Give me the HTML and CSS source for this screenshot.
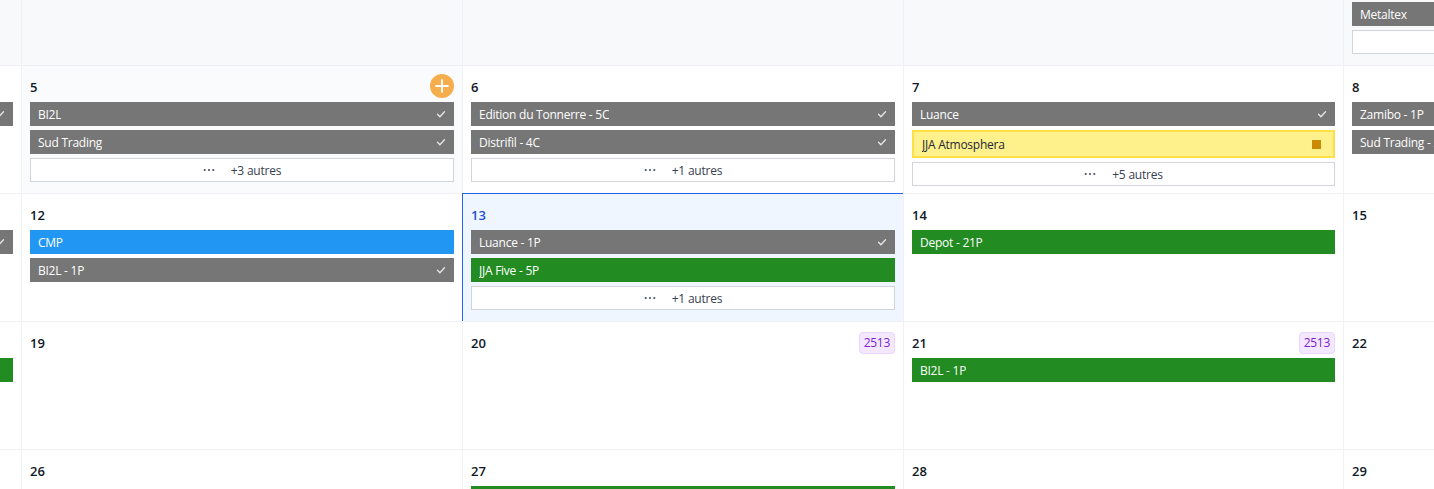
FILE: index.html
```html
<!DOCTYPE html>
<html lang="fr">
<head>
<meta charset="utf-8">
<title>Calendrier</title>
<link rel="stylesheet" href="styles.css">
</head>
<body>
<div class="viewport">
  <div class="calendar">
    <!-- Row 1 -->
    <div class="cell out"><div class="head"><span class="num">28</span></div></div>
    <div class="cell out"><div class="head"><span class="num">29</span></div></div>
    <div class="cell out"><div class="head"><span class="num">30</span></div></div>
    <div class="cell out"><div class="head"><span class="num">31</span></div></div>
    <div class="cell out">
      <div class="head"><span class="num">1</span></div>
      <div class="ev gray"><span class="lbl">Luance</span><svg class="chk" viewBox="0 0 12 12"><path d="M2.5 6.3l2.4 2.4 4.6-5"/></svg></div>
      <div class="ev gray"><span class="lbl">Metaltex</span><svg class="chk" viewBox="0 0 12 12"><path d="M2.5 6.3l2.4 2.4 4.6-5"/></svg></div>
      <button class="more"><svg class="dots" viewBox="0 0 14 4"><circle cx="2" cy="2" r="1.3"/><circle cx="7" cy="2" r="1.3"/><circle cx="12" cy="2" r="1.3"/></svg><span>+2 autres</span></button>
    </div>

    <!-- Row 2 -->
    <div class="cell">
      <div class="head"><span class="num">4</span></div>
      <div class="ev gray"><span class="lbl">Sud Trading</span><svg class="chk" viewBox="0 0 12 12"><path d="M2.5 6.3l2.4 2.4 4.6-5"/></svg></div>
    </div>
    <div class="cell hover">
      <div class="head"><span class="num">5</span><span class="add"><svg viewBox="0 0 24 24"><path d="M12 6v12M6 12h12"/></svg></span></div>
      <div class="ev gray"><span class="lbl">BI2L</span><svg class="chk" viewBox="0 0 12 12"><path d="M2.5 6.3l2.4 2.4 4.6-5"/></svg></div>
      <div class="ev gray"><span class="lbl">Sud Trading</span><svg class="chk" viewBox="0 0 12 12"><path d="M2.5 6.3l2.4 2.4 4.6-5"/></svg></div>
      <button class="more"><svg class="dots" viewBox="0 0 14 4"><circle cx="2" cy="2" r="1.3"/><circle cx="7" cy="2" r="1.3"/><circle cx="12" cy="2" r="1.3"/></svg><span>+3 autres</span></button>
    </div>
    <div class="cell">
      <div class="head"><span class="num">6</span></div>
      <div class="ev gray"><span class="lbl">Edition du Tonnerre - 5C</span><svg class="chk" viewBox="0 0 12 12"><path d="M2.5 6.3l2.4 2.4 4.6-5"/></svg></div>
      <div class="ev gray"><span class="lbl">Distrifil - 4C</span><svg class="chk" viewBox="0 0 12 12"><path d="M2.5 6.3l2.4 2.4 4.6-5"/></svg></div>
      <button class="more"><svg class="dots" viewBox="0 0 14 4"><circle cx="2" cy="2" r="1.3"/><circle cx="7" cy="2" r="1.3"/><circle cx="12" cy="2" r="1.3"/></svg><span>+1 autres</span></button>
    </div>
    <div class="cell">
      <div class="head"><span class="num">7</span></div>
      <div class="ev gray"><span class="lbl">Luance</span><svg class="chk" viewBox="0 0 12 12"><path d="M2.5 6.3l2.4 2.4 4.6-5"/></svg></div>
      <div class="ev yellow"><span class="lbl">JJA Atmosphera</span><span class="sq"></span></div>
      <button class="more"><svg class="dots" viewBox="0 0 14 4"><circle cx="2" cy="2" r="1.3"/><circle cx="7" cy="2" r="1.3"/><circle cx="12" cy="2" r="1.3"/></svg><span>+5 autres</span></button>
    </div>
    <div class="cell">
      <div class="head"><span class="num">8</span></div>
      <div class="ev gray"><span class="lbl">Zamibo - 1P</span><svg class="chk" viewBox="0 0 12 12"><path d="M2.5 6.3l2.4 2.4 4.6-5"/></svg></div>
      <div class="ev gray"><span class="lbl">Sud Trading - 2P</span><svg class="chk" viewBox="0 0 12 12"><path d="M2.5 6.3l2.4 2.4 4.6-5"/></svg></div>
    </div>

    <!-- Row 3 -->
    <div class="cell">
      <div class="head"><span class="num">11</span></div>
      <div class="ev gray"><span class="lbl">Luance</span><svg class="chk" viewBox="0 0 12 12"><path d="M2.5 6.3l2.4 2.4 4.6-5"/></svg></div>
    </div>
    <div class="cell">
      <div class="head"><span class="num">12</span></div>
      <div class="ev blue"><span class="lbl">CMP</span></div>
      <div class="ev gray"><span class="lbl">BI2L - 1P</span><svg class="chk" viewBox="0 0 12 12"><path d="M2.5 6.3l2.4 2.4 4.6-5"/></svg></div>
    </div>
    <div class="cell today">
      <div class="head"><span class="num">13</span></div>
      <div class="ev gray"><span class="lbl">Luance - 1P</span><svg class="chk" viewBox="0 0 12 12"><path d="M2.5 6.3l2.4 2.4 4.6-5"/></svg></div>
      <div class="ev green"><span class="lbl">JJA Five - 5P</span></div>
      <button class="more"><svg class="dots" viewBox="0 0 14 4"><circle cx="2" cy="2" r="1.3"/><circle cx="7" cy="2" r="1.3"/><circle cx="12" cy="2" r="1.3"/></svg><span>+1 autres</span></button>
    </div>
    <div class="cell">
      <div class="head"><span class="num">14</span></div>
      <div class="ev green"><span class="lbl">Depot - 21P</span></div>
    </div>
    <div class="cell">
      <div class="head"><span class="num">15</span></div>
    </div>

    <!-- Row 4 -->
    <div class="cell">
      <div class="head"><span class="num">18</span></div>
      <div class="ev green"><span class="lbl">Depot - 3P</span></div>
    </div>
    <div class="cell">
      <div class="head"><span class="num">19</span></div>
    </div>
    <div class="cell">
      <div class="head"><span class="num">20</span><span class="badge">2513</span></div>
    </div>
    <div class="cell">
      <div class="head"><span class="num">21</span><span class="badge">2513</span></div>
      <div class="ev green"><span class="lbl">BI2L - 1P</span></div>
    </div>
    <div class="cell">
      <div class="head"><span class="num">22</span></div>
    </div>

    <!-- Row 5 -->
    <div class="cell">
      <div class="head"><span class="num">25</span></div>
    </div>
    <div class="cell">
      <div class="head"><span class="num">26</span></div>
    </div>
    <div class="cell">
      <div class="head"><span class="num">27</span></div>
      <div class="ev green"><span class="lbl">Depot - 4P</span></div>
    </div>
    <div class="cell">
      <div class="head"><span class="num">28</span></div>
    </div>
    <div class="cell">
      <div class="head"><span class="num">29</span></div>
    </div>
  </div>
</div>
</body>
</html>
```

FILE: styles.css
```css
* { box-sizing: border-box; }

html, body {
  margin: 0;
  padding: 0;
  background: #ffffff;
  font-family: "Open Sans", "Noto Sans", "Liberation Sans", sans-serif;
  color: #111827;
}

.viewport {
  width: 1434px;
  height: 489px;
  overflow: hidden;
}

.calendar {
  display: grid;
  grid-template-columns: 441px 441px 441px 440px 441px;
  grid-auto-rows: 128px;
  margin: -62px 0 0 -419px;
  width: max-content;
}

.cell {
  border-right: 1px solid #f0f1f4;
  border-bottom: 1px solid #eff0f3;
  padding: 8px;
  display: flex;
  flex-direction: column;
  gap: 4px;
  background: #ffffff;
  overflow: hidden;
  min-width: 0;
}

.cell.out { background: #f8f9fb; }
.cell.hover { background: #fafbfc; }
.cell.today {
  background: #eff6ff;
  box-shadow: -1px -1px 0 #2563eb;
}

.head {
  height: 24px;
  flex: none;
  display: flex;
  align-items: center;
  justify-content: space-between;
}

.num {
  font-size: 13px;
  font-weight: 600;
  color: #111827;
  line-height: 24px;
  padding-top: 2px;
}
.today .num { color: #1d4ed8; }

.add {
  width: 24px;
  height: 24px;
  border-radius: 50%;
  background: #f6ad4c;
  display: flex;
  align-items: center;
  justify-content: center;
}
.add svg { width: 24px; height: 24px; }
.add path { stroke: #ffffff; stroke-width: 1.8; fill: none; stroke-linecap: round; }

.badge {
  height: 22px;
  padding: 0 4px;
  border: 1px solid #e9d5ff;
  background: #f3e8ff;
  color: #7e22ce;
  border-radius: 4px;
  font-size: 12px;
  letter-spacing: -0.3px;
  line-height: 20px;
  margin-top: 2px;
}

.ev {
  flex: none;
  height: 24px;
  display: flex;
  align-items: center;
  justify-content: space-between;
  padding: 0 7px 0 8px;
  color: #ffffff;
  font-size: 12px;
  letter-spacing: -0.25px;
  white-space: nowrap;
}
.ev .lbl { overflow: hidden; }
.ev.gray { background: #767676; }
.ev.blue { background: #2196f3; }
.ev.green { background: #228b22; }
.ev.yellow {
  height: 28px;
  background: #fef08a;
  border: 2px solid #fde047;
  color: #1f2937;
  padding: 0 12px 0 8px;
}

.chk { width: 12px; height: 12px; flex: none; }
.chk path { stroke: #e8e8e8; stroke-width: 1.3; fill: none; stroke-linecap: round; stroke-linejoin: round; }

.sq {
  width: 9px;
  height: 9px;
  background: #ca8a04;
  flex: none;
}

.more {
  flex: none;
  height: 24px;
  border: 1px solid #d1d5db;
  background: #ffffff;
  display: flex;
  align-items: center;
  justify-content: center;
  gap: 16px;
  font-family: inherit;
  font-size: 12px;
  letter-spacing: -0.2px;
  color: #374151;
  padding: 0;
  cursor: pointer;
}
.dots { width: 12px; height: 4px; }
.dots circle { fill: #4b5563; }
```
